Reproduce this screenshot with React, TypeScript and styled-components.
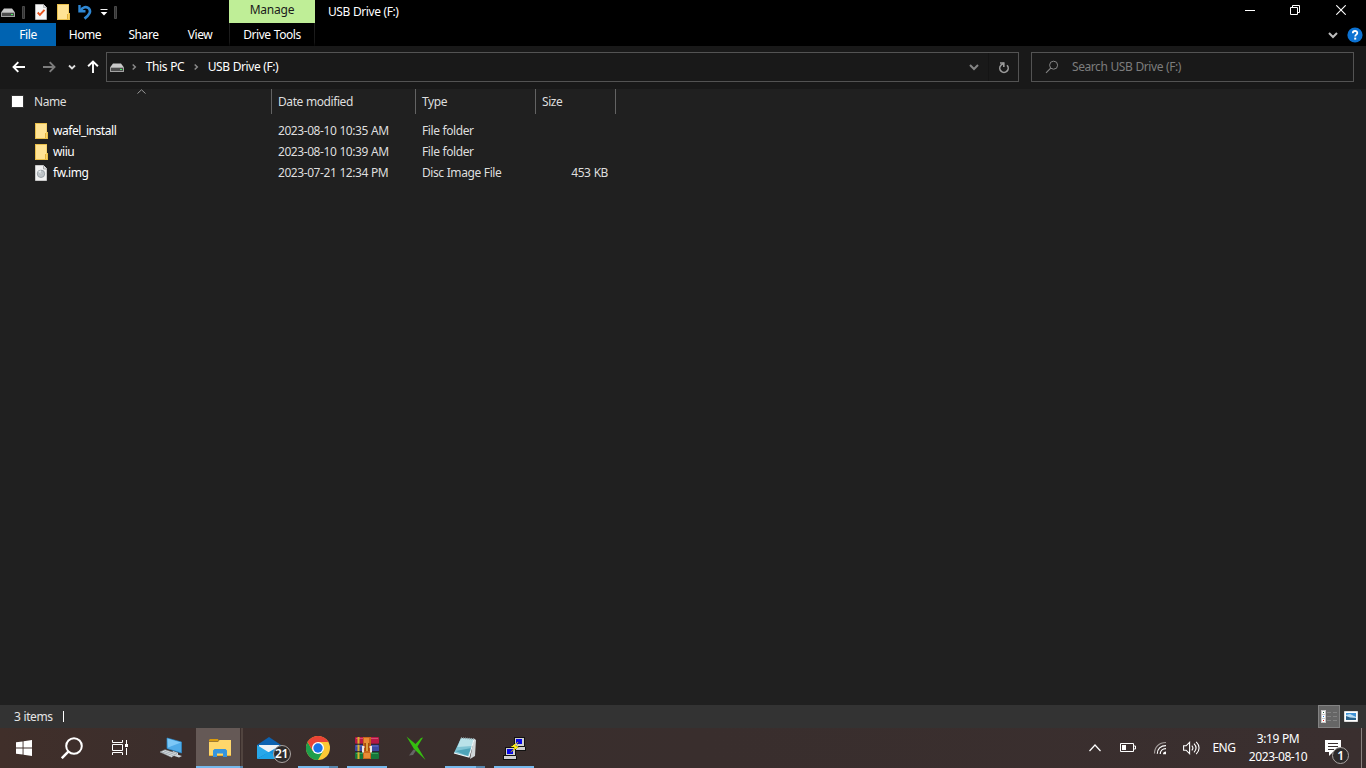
import React from 'react';
import styled, { createGlobalStyle } from 'styled-components';

const GlobalStyle = createGlobalStyle`
  * { box-sizing: border-box; }
  body { margin: 0; background: #202020; overflow: hidden; }
  svg { display: block; flex: none; }
`;

const Window = styled.div`
  width: 1366px;
  height: 768px;
  display: flex;
  flex-direction: column;
  background: #202020;
  color: #fff;
  font: 12px/16px 'Noto Sans', 'Open Sans', sans-serif;
`;

const Text = styled.span<{ $ls?: number; $size?: number; $color?: string }>`
  white-space: nowrap;
  font-size: ${(p) => p.$size ?? 12}px;
  letter-spacing: ${(p) => p.$ls ?? -0.43}px;
  word-spacing: 0.4px;
  color: ${(p) => p.$color ?? 'inherit'};
`;

const Slot = styled.div<{ $w: number }>`
  width: ${(p) => p.$w}px;
  height: 100%;
  flex: none;
  display: flex;
  align-items: center;
  justify-content: center;
`;

const Spacer = styled.div`
  flex: 1;
`;

/* Title bar and ribbon */
const TitleBar = styled.header`
  height: 23px;
  display: flex;
  padding-right: 2px;
  background: #000;
`;
const QuickAccess = styled.div`
  width: 229px;
  height: 24px;
  display: flex;
`;
const ContextTab = styled.div`
  width: 86px;
  height: 23px;
  padding-top: 2px;
  text-align: center;
  background: #bfee97;
  color: #1a1a1a;
`;
const Title = styled.div`
  padding: 4px 0 0 13px;
`;
const CaptionButton = styled.div`
  width: 46px;
  height: 20px;
  display: flex;
  align-items: center;
  justify-content: center;
  &:nth-last-child(3) {
    padding-left: 2px;
  }
`;
const Ribbon = styled.nav`
  height: 23px;
  display: flex;
  background: #000;
`;
const Tab = styled.div<{ $w: number; $file?: boolean; $context?: boolean }>`
  width: ${(p) => p.$w}px;
  height: 23px;
  padding-top: 4px;
  text-align: center;
  background: ${(p) => (p.$file ? '#0063b1' : 'transparent')};
  border: solid transparent;
  border-width: 0 ${(p) => (p.$context ? 1 : 0)}px;
  border-image: ${(p) => (p.$context ? 'linear-gradient(#222, #181818 80%, #000) 1' : 'none')};
`;

/* Navigation row */
const NavRow = styled.div`
  height: 43px;
  padding-top: 6px;
  display: flex;
  background: #191919;
`;
const NavButtons = styled.div`
  width: 106px;
  height: 30px;
  display: flex;
  padding-left: 4px;
`;
const AddressBox = styled.div`
  width: 913px;
  height: 30px;
  display: flex;
  align-items: center;
  border: 1px solid #535353;
`;
const Divider = styled.div`
  width: 1px;
  height: 28px;
  background: #141414;
`;
const SearchBox = styled.div`
  width: 323px;
  height: 30px;
  margin-left: 12px;
  padding-left: 13px;
  display: flex;
  align-items: center;
  gap: 13px;
  border: 1px solid #535353;
`;

/* File list */
const FileList = styled.main`
  flex: 1;
  background: #202020;
  color: #dedede;
`;
const HeaderRow = styled.div`
  display: grid;
  grid-template-columns: 272px 144px 120px 80px;
  width: 616px;
  height: 25px;
  margin-bottom: 6px;
`;
const HeaderCell = styled.div`
  position: relative;
  display: flex;
  padding: 5px 0 0 6px;
  border-right: 1px solid #636363;
`;
const NameHeader = styled(HeaderCell)`
  padding-left: 11px;
  gap: 10px;
`;
const Checkbox = styled.div`
  width: 13px;
  height: 13px;
  margin-top: 1px;
  background: #fff;
  border: 1px solid #333;
`;
const SortMark = styled.div`
  position: absolute;
  top: 0;
  left: 137px;
`;
const FileRow = styled.div`
  display: grid;
  grid-template-columns: 271px 144px 120px 80px;
  height: 21px;
  align-items: center;
`;
const FileName = styled.div`
  display: flex;
  align-items: center;
  gap: 4px;
  padding-left: 35px;
  color: #fff;
`;
const Cell = styled.div<{ $right?: boolean }>`
  padding: 0 7px;
  text-align: ${(p) => (p.$right ? 'right' : 'left')};
`;

/* Status bar */
const StatusBar = styled.footer`
  height: 23px;
  display: flex;
  align-items: center;
  padding: 0 4px 0 14px;
  background: #333;
`;
const Caret = styled.div`
  width: 1px;
  height: 11px;
  margin-left: 10px;
  background: #fff;
`;
const ViewButton = styled.div<{ $active?: boolean }>`
  width: 22px;
  height: 23px;
  display: flex;
  align-items: center;
  justify-content: center;
  background: ${(p) => (p.$active ? '#666' : 'transparent')};
  border: 1px solid ${(p) => (p.$active ? '#838383' : 'transparent')};
`;

/* Taskbar */
const Taskbar = styled.div`
  height: 40px;
  display: flex;
  background: linear-gradient(90deg, #402f2a 0, #3b2e2c 180px, #392e2d 700px, #3a2f2f 100%);
`;
const PinnedApps = styled.div`
  display: flex;
  padding-left: 2px;
`;
const TaskItem = styled.div<{ $active?: boolean }>`
  width: 49px;
  height: 40px;
  display: flex;
  flex-direction: column;
  align-items: center;
  background: ${(p) => (p.$active ? 'linear-gradient(90deg, transparent 1px, #655956 1px, #655956 45px, #3b2e2c 45px, #3b2e2c 46px, #51443f 46px, #51443f 48px, transparent 48px)' : 'none')};
`;
const TaskIcon = styled.div`
  height: 38px;
  padding-top: 2px;
  display: flex;
  align-items: center;
`;
const Underline = styled.div<{ $main: number; $rest: number }>`
  height: 2px;
  width: ${(p) => p.$main + p.$rest}px;
  background: linear-gradient(90deg, #76b9ed ${(p) => p.$main}px, #5686ad ${(p) => p.$main}px);
`;
const Clock = styled.div`
  width: 72px;
  padding-top: 2px;
  display: flex;
  flex-direction: column;
  align-items: center;
  line-height: 18px;
`;
const ShowDesktop = styled.div`
  width: 5px;
  height: 40px;
  border-left: 1px solid #8a8280;
`;

const DriveIcon = () => (
  <svg width="16" height="16" viewBox="0 0 16 16">
    <path d="M4 4.500h8l3 4H1z" fill="#c9c9c9" />
    <rect x="1" y="8" width="14" height="5" rx=".6" fill="#a2a2a2" />
    <rect x="2" y="9" width="12" height="3" fill="#4c4c4c" />
    <rect x="11" y="10" width="2" height="1" fill="#43f05c" />
  </svg>
);
const FolderIcon = () => (
  <svg width="14" height="16" viewBox="0 0 14 16">
    <path d="M0 0h12v9h1v7H0z" fill="#e9bf4b" />
    <path d="M1 1h10.500v14H1z" fill="#ffe394" />
    <path d="M10 10h1v5h-1z" fill="#e3b23c" />
    <path d="M11 10h1v5h-1z" fill="#f9d366" />
  </svg>
);
const DiscFileIcon = () => (
  <svg width="14" height="16" viewBox="0 0 14 16">
    <path d="M.5.500h8L11.500 3.500v12H.500z" fill="#f2f2f2" stroke="#c8c8c8" />
    <path d="M8.500.500V4H12" fill="#ddd" stroke="#999" strokeWidth=".8" />
    <circle cx="6" cy="8.800" r="3.700" fill="#bfc5c9" stroke="#8e969b" strokeWidth=".8" />
    <path d="M6 8.800l-3-2a3.700 3.700 0 0 1 3-1.600z" fill="#e4e9eb" />
    <circle cx="6" cy="8.800" r="1.100" fill="#ddd" stroke="#a5adb1" strokeWidth=".5" />
  </svg>
);
const CheckDocIcon = () => (
  <svg width="14" height="16" viewBox="0 0 14 16">
    <path d="M.5.500h8L11.500 3.500v12H.500z" fill="#f7f7f7" stroke="#d0d0d0" strokeWidth=".7" />
    <path d="M8.500.500v3h3" fill="#ddd" stroke="#aaa" strokeWidth=".7" />
    <path d="M2.700 8.500l2.200 2.300 4.600-5" fill="none" stroke="#e8541e" strokeWidth="1.900" />
  </svg>
);
const UndoIcon = () => (
  <svg width="14" height="16" viewBox="0 0 14 16">
    <path d="M1.500 1v6.300h6" fill="none" stroke="#2f87d3" strokeWidth="2.400" />
    <path d="M2.500 6.600C4.500 3 8.500 2 10.800 4.400c2.700 3 .6 6.500-4.300 10.200" fill="none" stroke="#2f87d3" strokeWidth="2.700" />
  </svg>
);
const Grip = () => (
  <svg width="3" height="13" viewBox="0 0 3 13"><path d="M.5.500h2v12h-2z" fill="#333" stroke="#555" strokeWidth=".8" /></svg>
);
const CustomizeIcon = () => (
  <svg width="8" height="7" viewBox="0 0 8 7"><path d="M.5.500h7" stroke="#eee" /><path d="M.7 3h6.600L4 6.500z" fill="#fff" /></svg>
);
const Arrow = ({ dir, color = '#fff' }: { dir: 'left' | 'right' | 'up'; color?: string }) => (
  <svg width="14" height="14" viewBox="0 0 14 14">
    <path
      transform={`rotate(${{ left: 0, right: 180, up: 90 }[dir]} 7 7)`}
      d="M13 7H1.600M6.300 2.100L1.500 7l4.800 4.900" fill="none" stroke={color} strokeWidth="1.900"
    />
  </svg>
);
const Chevron = ({ w, h, color, stroke = 1.8, rotate = 0 }: { w: number; h: number; color: string; stroke?: number; rotate?: number }) => (
  <svg width="14" height="14" viewBox="-7 -7 14 14">
    <path transform={`rotate(${rotate})`} d={`M${-w / 2} ${-h / 2}L0 ${h / 2}L${w / 2} ${-h / 2}`} fill="none" stroke={color} strokeWidth={stroke} />
  </svg>
);
const RefreshIcon = () => (
  <svg width="12" height="13" viewBox="0 0 12 13">
    <path d="M9 4.200A4.200 4.200 0 1 1 3 4.200L5.800 2" fill="none" stroke="#9b9b9b" strokeWidth="1.600" />
    <path d="M5.800 6V2H2" fill="none" stroke="#9b9b9b" strokeWidth="1.600" />
  </svg>
);
const FindIcon = () => (
  <svg width="14" height="14" viewBox="0 0 14 14">
    <circle cx="8.600" cy="5.200" r="4" fill="none" stroke="#858585" />
    <path d="M5.700 8.100L1 12.800" stroke="#858585" strokeWidth="1.100" />
  </svg>
);
const HelpIcon = () => (
  <svg width="16" height="16" viewBox="0 0 16 16">
    <circle cx="8" cy="8" r="7.600" fill="#0c72d2" />
    <path d="M5.800 6.300c0-3 4.500-3 4.500-.3 0 1.700-2.100 1.600-2.100 3.400" fill="none" stroke="#fff" strokeWidth="1.800" />
    <rect x="7.200" y="10.600" width="2" height="2" fill="#fff" />
  </svg>
);
const MinimizeIcon = () => <svg width="10" height="10" viewBox="0 0 10 10"><path d="M0 5.500h10" stroke="#fff" /></svg>;
const RestoreIcon = () => (
  <svg width="10" height="10" viewBox="0 0 10 10">
    <path d="M.5 2.500h7v7h-7zM2.500 2.500v-2h7v7h-2" fill="none" stroke="#fff" />
  </svg>
);
const CloseIcon = () => <svg width="10" height="10" viewBox="0 0 10 10"><path d="M.3.300l9.400 9.400M9.700.300L.3 9.700" stroke="#fff" strokeWidth="1.100" /></svg>;
const DetailsIcon = () => (
  <svg width="16" height="13" viewBox="0 0 16 13">
    <path d="M0 0h5v13H0z" fill="#c8c8c8" />
    <path d="M1 1h3v3H1zM1 5h3v3H1zM1 9h3v3H1z" fill="#fff" />
    <path d="M2 2h1v1H2z" fill="#2a5c3a" /><path d="M2 6h1v1H2z" fill="#1b7ae0" /><path d="M2 10h1v1H2z" fill="#e01b1b" />
    <path d="M6 2.500h4M12 2.500h4M6 6.500h4M12 6.500h4M6 10.500h4M12 10.500h4" stroke="#828282" />
  </svg>
);
const ThumbsIcon = () => (
  <svg width="14" height="11" viewBox="0 0 14 11">
    <path d="M.5.500h13v10H.500z" fill="#fff" stroke="#ddd" />
    <path d="M2 2h10v7H2z" fill="#3f92d6" />
    <path d="M2 4l4-1 6 3v1H2z" fill="#b9dcf3" /><path d="M2 5l4 1.500 6 .500v2H2z" fill="#28618b" />
  </svg>
);

const StartIcon = () => (
  <svg width="16" height="16" viewBox="0 0 16 16">
    <path d="M0 2.300l6.600-.9v6.100H0zM7.500 1.200L16 0v7.500H7.500zM0 8.400h6.600v6.200L0 13.700zM7.500 8.400H16V16l-8.500-1.200z" fill="#fff" />
  </svg>
);
const SearchIcon = () => (
  <svg width="22" height="22" viewBox="0 0 22 22">
    <circle cx="13" cy="9" r="7.800" fill="none" stroke="#fff" strokeWidth="2" />
    <path d="M7.300 14.700L.8 21.200" stroke="#fff" strokeWidth="2.500" />
  </svg>
);
const TaskViewIcon = () => (
  <svg width="16" height="16" viewBox="0 0 16 16">
    <path d="M.5 0v2.500h10V0M.5 15v-2.500h10V15M.5 4.500h10v6H.5zM14.500 0v4M14.500 8v7" fill="none" stroke="#fff" />
    <path d="M13 4h3v3h-3z" fill="#fff" />
  </svg>
);
const ComputerIcon = () => (
  <svg width="24" height="22" viewBox="0 0 24 22">
    <path d="M8 1l14.500 4v11L8 11.500z" fill="#4fabe8" stroke="#2b89c9" strokeWidth=".7" />
    <path d="M8.500 1.500l13.500 4L9 10.500z" fill="#7cc8f7" />
    <path d="M14 14l5 1.800v2l4 1.200-3 1.500-8-2.500z" fill="#cfd5da" />
    <path d="M1 15l5-2.300 12 3.800-5.500 3.700z" fill="#dfe3e6" stroke="#8f989e" strokeWidth=".6" />
    <path d="M3 15l11 3.600M5 14l11 3.500" stroke="#8b98a0" strokeWidth=".7" />
  </svg>
);
const ExplorerIcon = () => (
  <svg width="22" height="19" viewBox="0 0 22 19">
    <path d="M0 1l1-1h8l1 2.500H0z" fill="#d99b0e" />
    <path d="M0 3h9l1.500-2H22v16H0z" fill="#ffd76b" />
    <path d="M0 16h22v1H0z" fill="#eeb331" />
    <path d="M4 18v-6.500l1.500-1.500h11l1.500 1.500V18h-4v-3.500H8V18z" fill="#3795dd" />
  </svg>
);
const ChromeIcon = () => (
  <svg width="24" height="24" viewBox="0 0 24 24">
    <circle cx="12" cy="12" r="12" fill="#fcc934" />
    <path d="M12 12L6.800 15 1.600 6A12 12 0 0 0 12 24l5.200-9z" fill="#1e9e4b" />
    <path d="M12 12V6h10.400A12 12 0 0 0 1.600 6l5.200 9z" fill="#ea4335" />
    <circle cx="12" cy="12" r="6" fill="#fff" />
    <circle cx="12" cy="12" r="4.700" fill="#1a73e8" />
  </svg>
);
const WinRarIcon = () => (
  <svg width="24" height="22" viewBox="0 0 24 22">
    <rect width="24" height="7" rx="1" fill="#b51946" /><path d="M1 1.500h22" stroke="#d64c73" />
    <rect y="7.500" width="24" height="7" rx="1" fill="#3c49a4" /><path d="M1 9h22" stroke="#6672c2" />
    <rect y="15" width="24" height="7" rx="1" fill="#16773b" /><path d="M1 16.500h22" stroke="#37a058" />
    <path d="M3.500 0v22" stroke="#d9b12c" strokeWidth="2" />
    <path d="M0 7.200h24M0 14.700h24" stroke="#252030" />
    <rect x="8" width="8" height="22" fill="#c8661b" />
    <path d="M9 1h5v5H9zM9 16h6v5H9z" fill="#e98b35" />
    <path d="M8 15.500V10h8v5.500" fill="none" stroke="#eee6dc" strokeWidth="2" />
    <path d="M9.500 6h5v8h-5z" fill="#a7480c" /><path d="M12 6v8" stroke="#f9cf57" strokeWidth="1.300" />
  </svg>
);
const XIcon = () => (
  <svg width="20" height="24" viewBox="0 0 20 24">
    <path d="M7.500 13.500L3 19.500l4-.5 3-4.500z" fill="#656565" />
    <path d="M.5.500L9.500 8 15 2l2-.5-5.500 9L19.500 24 8 13z" fill="#35bd10" />
  </svg>
);
const NotepadIcon = () => (
  <svg width="24" height="24" viewBox="0 0 24 24">
    <path d="M21 2.500l2 1.500-1 16-5 3z" fill="#cfd5d7" />
    <path d="M8 2l13 1-5 18L1 17z" fill="#7fc4d4" />
    <path d="M8 2l13 1-2 7L4.500 11z" fill="#b9e2e9" /><path d="M2.500 15l12 5 4-8z" fill="#4ea4b8" />
    <path d="M1 17l15 4 5-17.500" fill="none" stroke="#eef7f9" strokeWidth="1.100" />
    <path d="M8 2l13 1" stroke="#97a4a8" strokeWidth="1.600" strokeDasharray="1 1" />
  </svg>
);
const PuttyIcon = () => (
  <svg width="24" height="24" viewBox="0 0 24 24" shapeRendering="crispEdges">
    <path d="M12 1h10v9H12zM10 10h12l1 1v3H10z" fill="#d0d0d0" stroke="#111" strokeWidth="1" />
    <path d="M14 3h6v5h-6z" fill="#0808e8" />
    <path d="M3 11h10v8H3zM1 19h12l1 1v3H1z" fill="#d0d0d0" stroke="#111" strokeWidth="1" />
    <path d="M5 13h6v5H5z" fill="#0808e8" />
    <path d="M17 5.500l-8 5 4 1.500-5 4.500 9-5.500-4-1.500z" fill="#ffef19" stroke="#625800" strokeWidth=".3" />
  </svg>
);
const MailWrap = styled.div`
  position: relative;
`;
const Badge = styled.div<{ $size: number }>`
  position: absolute;
  width: ${(p) => p.$size}px;
  height: ${(p) => p.$size}px;
  border: 1px solid #aaa4a2;
  border-radius: 50%;
  background: #2e2b2b;
  display: flex;
  align-items: center;
  justify-content: center;
  font-weight: 600;
`;
const MailBadge = styled(Badge)`
  left: 16px;
  top: 8px;
`;
const NoteWrap = styled.div`
  position: relative;
`;
const NoteBadge = styled(Badge)`
  left: 7px;
  top: 7px;
`;
const MailIcon = () => (
  <MailWrap>
    <svg width="24" height="22" viewBox="0 0 24 22">
      <path d="M0 8L12 0l12 8v3H0z" fill="#0c62b0" /><path d="M2 8h20v6l-10 4L2 14z" fill="#eef2f5" />
      <path d="M0 8l12 7.500L0 22z" fill="#28a8ea" /><path d="M24 8L0 22h24z" fill="#1490df" />
      <path d="M0 22l12-7 12 7z" fill="#1fa3e7" />
    </svg>
    <MailBadge $size={18}><Text $size={12} $ls={-0.4}>21</Text></MailBadge>
  </MailWrap>
);
const BatteryIcon = () => (
  <svg width="16" height="10" viewBox="0 0 16 10">
    <path d="M.5.500h13v8H.500zM14 3h1.500v3H14" fill="none" stroke="#fff" /><path d="M2 2h4v5H2z" fill="#fff" />
  </svg>
);
const WifiIcon = () => (
  <svg width="14" height="14" viewBox="0 0 14 14">
    <path d="M1.500 12.500C1.500 6 6 1.500 13 1.500" fill="none" stroke="#a59e9d" strokeWidth="1.200" />
    <path d="M4.300 12.800C4.300 8 7.500 4.600 13 4.600M7.200 13C7.200 9.700 9.500 7.700 13 7.700" fill="none" stroke="#fff" strokeWidth="1.200" />
    <path d="M10 13.200c0-1.800 1.200-2.800 3-2.800v2.800z" fill="#fff" />
  </svg>
);
const SpeakerIcon = () => (
  <svg width="17" height="14" viewBox="0 0 17 14">
    <path d="M.6 4.800h2.500L6.600 1.400v11.200L3.100 9.200H.6z" fill="none" stroke="#fff" strokeWidth="1.100" />
    <path d="M8.800 4.600c1.300 1.400 1.300 3.400 0 4.800M11 2.700c2.500 2.600 2.500 6 0 8.600M13.200.8c3.800 3.700 3.800 8.700 0 12.400" fill="none" stroke="#fff" strokeWidth="1.100" />
  </svg>
);
const NotificationIcon = () => (
  <NoteWrap>
    <svg width="16" height="16" viewBox="0 0 16 16">
      <path d="M0 0h16v12H8l-4 4v-4H0z" fill="#fff" /><path d="M3 3.500h10M3 6.500h10M3 9.500h6" stroke="#3a2f2f" />
    </svg>
    <NoteBadge $size={17}><Text $size={12}>1</Text></NoteBadge>
  </NoteWrap>
);

const files = [
  { name: 'wafel_install', date: '2023-08-10 10:35 AM', type: 'File folder', size: '', icon: <FolderIcon /> },
  { name: 'wiiu', date: '2023-08-10 10:39 AM', type: 'File folder', size: '', icon: <FolderIcon /> },
  { name: 'fw.img', date: '2023-07-21 12:34 PM', type: 'Disc Image File', size: '453 KB', icon: <DiscFileIcon /> },
];
const tasks = [
  { id: 'computer', icon: <ComputerIcon />, main: 0, rest: 0 },
  { id: 'explorer', icon: <ExplorerIcon />, main: 44, rest: 3, active: true },
  { id: 'mail', icon: <MailIcon />, main: 0, rest: 0 },
  { id: 'chrome', icon: <ChromeIcon />, main: 31, rest: 9 },
  { id: 'winrar', icon: <WinRarIcon />, main: 40, rest: 0 },
  { id: 'x', icon: <XIcon />, main: 0, rest: 0 },
  { id: 'notepad', icon: <NotepadIcon />, main: 31, rest: 9 },
  { id: 'putty', icon: <PuttyIcon />, main: 40, rest: 0 },
];

export default function App() {
  return (
    <Window>
      <GlobalStyle />
      <TitleBar>
        <QuickAccess>
          <Slot $w={16}><DriveIcon /></Slot>
          <Slot $w={15}><Grip /></Slot>
          <Slot $w={22}><CheckDocIcon /></Slot>
          <Slot $w={22}><FolderIcon /></Slot>
          <Slot $w={20}><UndoIcon /></Slot>
          <Slot $w={17}><CustomizeIcon /></Slot>
          <Slot $w={7}><Grip /></Slot>
        </QuickAccess>
        <ContextTab><Text $ls={-0.2}>Manage</Text></ContextTab>
        <Title><Text>USB Drive (F:)</Text></Title>
        <Spacer />
        <CaptionButton><MinimizeIcon /></CaptionButton>
        <CaptionButton><RestoreIcon /></CaptionButton>
        <CaptionButton><CloseIcon /></CaptionButton>
      </TitleBar>
      <Ribbon>
        <Tab $w={56} $file><Text>File</Text></Tab>
        <Tab $w={58}><Text>Home</Text></Tab>
        <Tab $w={59}><Text>Share</Text></Tab>
        <Tab $w={54}><Text>View</Text></Tab>
        <Slot $w={2} />
        <Tab $w={86} $context><Text>Drive Tools</Text></Tab>
        <Spacer />
        <Slot $w={22}><Chevron w={8} h={4} color="#bdbdbd" stroke={2} /></Slot>
        <Slot $w={22}><HelpIcon /></Slot>
      </Ribbon>
      <NavRow>
        <NavButtons>
          <Slot $w={30}><Arrow dir="left" /></Slot>
          <Slot $w={30}><Arrow dir="right" color="#7d7d7d" /></Slot>
          <Slot $w={16}><Chevron w={6} h={3} color="#ddd" /></Slot>
          <Slot $w={26}><Arrow dir="up" /></Slot>
        </NavButtons>
        <AddressBox>
          <Slot $w={20}><DriveIcon /></Slot>
          <Slot $w={14}><Chevron w={5} h={2.6} color="#8b8b8b" stroke={1.5} rotate={-90} /></Slot>
          <Slot $w={48}><Text>This PC</Text></Slot>
          <Slot $w={14}><Chevron w={5} h={2.6} color="#8b8b8b" stroke={1.5} rotate={-90} /></Slot>
          <Slot $w={80}><Text>USB Drive (F:)</Text></Slot>
          <Spacer />
          <Slot $w={28}><Chevron w={8} h={4} color="#858585" stroke={2} /></Slot>
          <Divider />
          <Slot $w={29}><RefreshIcon /></Slot>
        </AddressBox>
        <SearchBox>
          <FindIcon />
          <Text $color="#7d7d7d">Search USB Drive (F:)</Text>
        </SearchBox>
      </NavRow>
      <FileList>
        <HeaderRow>
          <NameHeader>
            <Checkbox />
            <Text>Name</Text>
            <SortMark><svg width="9" height="5" viewBox="0 0 9 5"><path d="M.5 4.500l4-3.700 4 3.700" fill="none" stroke="#9a9a9a" /></svg></SortMark>
          </NameHeader>
          <HeaderCell><Text>Date modified</Text></HeaderCell>
          <HeaderCell><Text>Type</Text></HeaderCell>
          <HeaderCell><Text>Size</Text></HeaderCell>
        </HeaderRow>
        {files.map((f) => (
          <FileRow key={f.name}>
            <FileName>{f.icon}<Text>{f.name}</Text></FileName>
            <Cell><Text>{f.date}</Text></Cell>
            <Cell><Text>{f.type}</Text></Cell>
            <Cell $right><Text>{f.size}</Text></Cell>
          </FileRow>
        ))}
      </FileList>
      <StatusBar>
        <Text $color="#e6e6e6">3 items</Text>
        <Caret />
        <Spacer />
        <ViewButton $active><DetailsIcon /></ViewButton>
        <ViewButton><ThumbsIcon /></ViewButton>
      </StatusBar>
      <Taskbar>
        <Slot $w={48}><StartIcon /></Slot>
        <Slot $w={48}><SearchIcon /></Slot>
        <Slot $w={48}><TaskViewIcon /></Slot>
        <PinnedApps>
          {tasks.map((t) => (
            <TaskItem key={t.id} $active={t.active}>
              <TaskIcon>{t.icon}</TaskIcon>
              <Underline $main={t.main} $rest={t.rest} />
            </TaskItem>
          ))}
        </PinnedApps>
        <Spacer />
        <Slot $w={32}><Chevron w={11} h={6} color="#fff" stroke={1.2} rotate={180} /></Slot>
        <Slot $w={33}><BatteryIcon /></Slot>
        <Slot $w={32}><WifiIcon /></Slot>
        <Slot $w={30}><SpeakerIcon /></Slot>
        <Slot $w={36}><Text>ENG</Text></Slot>
        <Clock><Text>3:19 PM</Text><Text>2023-08-10</Text></Clock>
        <Slot $w={3} />
        <Slot $w={32}><NotificationIcon /></Slot>
        <Slot $w={12} />
        <ShowDesktop />
      </Taskbar>
    </Window>
  );
}
